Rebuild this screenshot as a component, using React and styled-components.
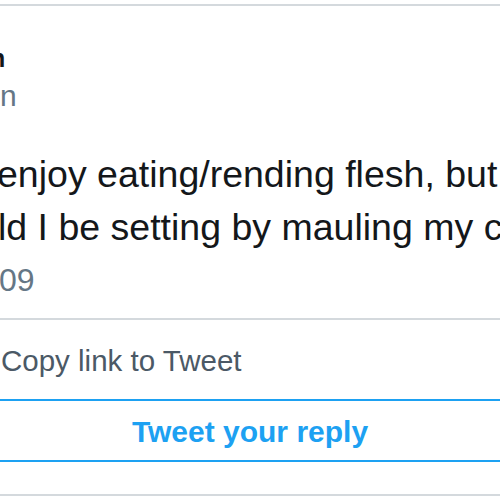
import React from 'react';
import styled, { createGlobalStyle } from 'styled-components';

const GlobalStyle = createGlobalStyle`
  html, body {
    margin: 0;
    padding: 0;
    background: #fff;
  }
  body {
    font-family: "Liberation Sans", Arial, sans-serif;
    overflow: hidden;
  }
`;

const Page = styled.div`
  width: 500px;
  height: 500px;
  overflow: hidden;
  background: #fff;
`;

const Card = styled.article`
  margin-top: 4px;
  border-top: 2px solid #d4d9dd;
`;

const Tweet = styled.section`
  padding: 37px 0 21px;
  border-bottom: 2px solid #d4d9dd;
  overflow: hidden;
`;

const Name = styled.div`
  font-size: 25px;
  line-height: 30px;
  font-weight: 700;
  color: #14171a;
  margin-left: -10px;
`;

const Handle = styled.div`
  margin-top: 5px;
  font-size: 30px;
  line-height: 36px;
  color: #657786;
`;

const Text = styled.div`
  margin-top: 34px;
  font-size: 37.5px;
  line-height: 53px;
  color: #14171a;
`;

const Line = styled.div`
  white-space: nowrap;
  margin-left: ${(p) => p.$shift || 0}px;
`;

const Stamp = styled.div`
  margin-top: 9px;
  margin-left: -1px;
  font-size: 32px;
  line-height: 34px;
  color: #657786;
`;

const MenuItem = styled.div`
  padding: 24px 0 21px 1px;
  font-size: 29.5px;
  line-height: 34px;
  color: #4b5966;
`;

const ReplyButton = styled.div`
  border-top: 2px solid #1da1f2;
  border-bottom: 2px solid #1da1f2;
  padding: 14px 0 11px;
  text-align: center;
  font-size: 30px;
  line-height: 34px;
  font-weight: 700;
  color: #1da1f2;
`;

const Footer = styled.div`
  margin-top: 32px;
  border-top: 2px solid #d4d9dd;
`;

export default function App() {
  return (
    <Page>
      <GlobalStyle />
      <Card>
        <Tweet>
          <Name>n</Name>
          <Handle>n</Handle>
          <Text>
            <Line $shift={-3}>enjoy eating/rending flesh, but</Line>
            <Line $shift={-2}>ld I be setting by mauling my ch</Line>
          </Text>
          <Stamp>09</Stamp>
        </Tweet>
        <MenuItem>Copy link to Tweet</MenuItem>
        <ReplyButton>Tweet your reply</ReplyButton>
        <Footer />
      </Card>
    </Page>
  );
}
